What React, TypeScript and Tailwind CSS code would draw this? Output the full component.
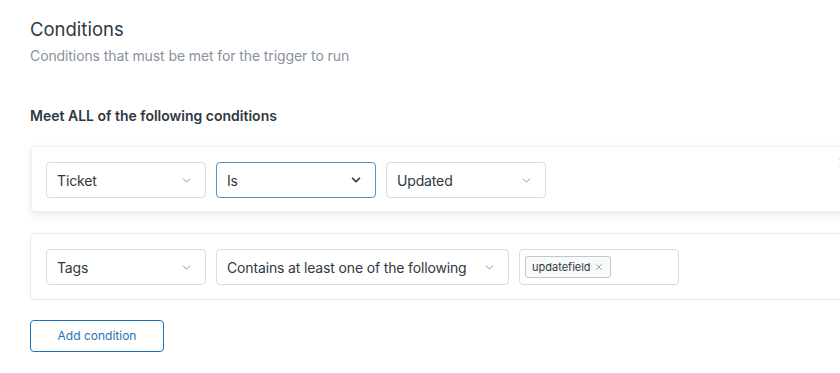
import { ChevronDown, X } from 'lucide-react'

function Select({ label, width, focused }: { label: string; width: string; focused?: boolean }) {
  return (
    <div
      className={`${width} h-[36px] flex items-center justify-between rounded-[4px] bg-white pl-[10px] pr-[12px] border ${
        focused ? 'border-[#5293c7]' : 'border-[#d8dcde]'
      }`}
    >
      <span className="text-[14px] tracking-[-0.15px] text-[#2f3941]">{label}</span>
      <ChevronDown
        size={focused ? 14 : 13}
        strokeWidth={focused ? 3 : 1.75}
        className={focused ? 'text-[#2f3941]' : 'text-[#87929d]'}
      />
    </div>
  )
}

export default function App() {
  return (
    <div
      className="w-[840px] h-[373px] overflow-hidden bg-white pl-[30px]"
      style={{ fontFamily: 'Inter, "Noto Sans", sans-serif' }}
    >
      {/* Header */}
      <h2 className="pt-[16px] text-[18.5px] leading-[26px] text-[#2f3941]">Conditions</h2>
      <p className="mt-[4px] text-[14px] leading-[20px] text-[#87929d] tracking-[-0.1px]">
        Conditions that must be met for the trigger to run
      </p>

      <h3 className="mt-[40px] text-[14px] leading-[20px] font-semibold text-[#2f3941]">
        Meet ALL of the following conditions
      </h3>

      {/* Condition 1 */}
      <div className="mt-[20px] ml-[1px] w-[840px] h-[66px] bg-white rounded-[4px] border border-[#eef0f1] shadow-[0_3px_8px_rgba(4,68,77,0.1)] flex items-start px-[14px] pt-[15px]">
        <div className="flex gap-[10px]">
          <Select label="Ticket" width="w-[160px]" />
          <Select label="Is" width="w-[160px]" focused />
          <Select label="Updated" width="w-[160px]" />
        </div>
        <X size={12} strokeWidth={2} className="ml-[291px] mt-[-5px] text-[#68737d]" />
      </div>

      {/* Condition 2 */}
      <div className="mt-[21px] w-[840px] h-[67px] bg-white rounded-[4px] border border-[#e9ebed] flex items-start px-[15px] pt-[15px]">
        <div className="flex gap-[10px]">
          <Select label="Tags" width="w-[160px]" />
          <Select label="Contains at least one of the following" width="w-[293px]" />
          <div className="w-[160px] h-[36px] rounded-[4px] border border-[#d8dcde] flex items-center pl-[5px]">
            <span className="h-[22px] flex items-center gap-[3px] rounded-[3px] border border-[#c2c8cc] bg-[#f8f9f9] px-[6px] text-[11px] text-[#2f3941]">
              updatefield
              <X size={10} strokeWidth={1.5} className="text-[#68737d]" />
            </span>
          </div>
        </div>
      </div>

      {/* Add */}
      <button className="mt-[20px] w-[134px] h-[32px] rounded-[4px] border border-[#1f73b7] text-[12px] text-[#1f73b7] bg-white">
        Add condition
      </button>
    </div>
  )
}
